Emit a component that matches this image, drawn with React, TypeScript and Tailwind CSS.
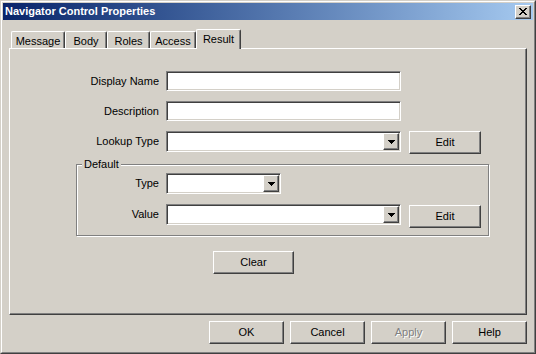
const sunken =
  'border border-t-[#808080] border-l-[#808080] border-b-white border-r-white shadow-[inset_1px_1px_0_#404040,inset_-1px_-1px_0_#d4d0c8] bg-white';
const raised =
  'border border-t-white border-l-white border-b-[#404040] border-r-[#404040] shadow-[inset_-1px_-1px_0_#808080] bg-[#d4d0c8]';

function Arrow() {
  return (
    <svg width="7" height="4" viewBox="0 0 7 4" shapeRendering="crispEdges">
      <polygon points="0,0 7,0 3.5,4" fill="#000" />
    </svg>
  );
}

function TextBox({ width }: { width: number }) {
  return <div className={`${sunken} h-[20px]`} style={{ width }} />;
}

function Combo({ width }: { width: number }) {
  return (
    <div className={`${sunken} h-[21px] flex justify-end p-px`} style={{ width }}>
      <div className={`${raised} w-[16px] h-full flex items-center justify-center`}>
        <Arrow />
      </div>
    </div>
  );
}

function Button({ label, w, disabled }: { label: string; w: string; disabled?: boolean }) {
  return (
    <div className={`${raised} ${w} h-[23px] flex items-center justify-center leading-none`}>
      <span className={disabled ? 'text-[#808080] [text-shadow:1px_1px_0_#fff]' : 'text-black'}>{label}</span>
    </div>
  );
}

function Tab({ label, w, active }: { label: string; w: string; active?: boolean }) {
  if (active) {
    return (
      <div
        className={`${w} h-[20px] relative z-10 bg-[#d4d0c8] border-t border-l border-r border-t-white border-l-white border-r-[#404040] shadow-[inset_-1px_0_0_#808080] rounded-t-[2px] flex items-center justify-center pb-px`}
      >
        {label}
      </div>
    );
  }
  return (
    <div
      className={`${w} h-[17px] mb-px bg-[#d4d0c8] border-t border-l border-r border-t-white border-l-white border-r-[#404040] shadow-[inset_-1px_0_0_#808080] rounded-t-[2px] flex items-center justify-center pt-[2px]`}
    >
      {label}
    </div>
  );
}

export default function App() {
  return (
    <div className="w-[536px] h-[354px] bg-[#d4d0c8] border border-t-[#d4d0c8] border-l-[#d4d0c8] border-b-[#404040] border-r-[#404040] font-['Liberation_Sans',Arial,sans-serif] text-[11px] text-black select-none">
      <div className="h-full border border-t-white border-l-white border-b-[#808080] border-r-[#808080] p-px flex flex-col">

        {/* ── Title bar ───────────────────────────── */}
        <div className="h-[17px] flex items-center justify-between bg-gradient-to-r from-[#0a246a] to-[#a6caf0] pl-[2px] pr-[2px]">
          <span className="text-white font-bold leading-none">Navigator Control Properties</span>
          <div className={`${raised} w-[16px] h-[14px] flex items-center justify-center`}>
            <svg width="8" height="7" viewBox="0 0 8 7" shapeRendering="crispEdges">
              <path d="M0 0h2v1h-2zM6 0h2v1h-2zM1 1h2v1h-2zM5 1h2v1h-2zM2 2h4v1h-4zM3 3h2v1h-2zM2 4h4v1h-4zM1 5h2v1h-2zM5 5h2v1h-2zM0 6h2v1h-2zM6 6h2v1h-2z" fill="#000" />
            </svg>
          </div>
        </div>

        {/* ── Tabs ────────────────────────────────── */}
        <div className="mt-[9px] ml-[8px] h-[20px] flex items-end">
          <Tab label="Message" w="w-[54px]" />
          <Tab label="Body" w="w-[42px]" />
          <Tab label="Roles" w="w-[43px]" />
          <Tab label="Access" w="w-[46px]" />
          <Tab label="Result" w="w-[45px]" active />
        </div>

        {/* ── Panel ───────────────────────────────── */}
        <div className={`-mt-px ml-[6px] w-[518px] h-[267px] ${raised} pt-[22px]`}>
          <div className="flex items-center">
            <div className="w-[156px] pr-[7px] text-right">Display Name</div>
            <TextBox width={235} />
          </div>
          <div className="flex items-center mt-[10px]">
            <div className="w-[156px] pr-[7px] text-right">Description</div>
            <TextBox width={235} />
          </div>
          <div className="flex items-start mt-[10px]">
            <div className="w-[156px] pr-[7px] text-right h-[21px] flex items-center justify-end">Lookup Type</div>
            <Combo width={235} />
            <div className="ml-[8px]">
              <Button label="Edit" w="w-[72px]" />
            </div>
          </div>

          {/* Default group */}
          <div className="relative mt-[10px] ml-[66px] w-[413px] h-[72px] border border-[#808080] shadow-[inset_1px_1px_0_#fff,1px_1px_0_#fff] pt-[8px]">
            <span className="absolute -top-[7px] left-[5px] px-[2px] bg-[#d4d0c8] leading-[13px]">Default</span>
            <div className="flex items-center">
              <div className="w-[89px] pr-[7px] text-right h-[21px] flex items-center justify-end">Type</div>
              <Combo width={115} />
            </div>
            <div className="flex items-start mt-[10px]">
              <div className="w-[89px] pr-[7px] text-right h-[21px] flex items-center justify-end">Value</div>
              <Combo width={235} />
              <div className="ml-[8px] mt-px">
                <Button label="Edit" w="w-[72px]" />
              </div>
            </div>
          </div>

          <div className="mt-[15px] ml-[203px]">
            <Button label="Clear" w="w-[81px]" />
          </div>
        </div>

        {/* ── Dialog buttons ──────────────────────── */}
        <div className="mt-[6px] mr-[6px] flex justify-end gap-[6px]">
          <Button label="OK" w="w-[75px]" />
          <Button label="Cancel" w="w-[75px]" />
          <Button label="Apply" w="w-[75px]" disabled />
          <Button label="Help" w="w-[75px]" />
        </div>
      </div>
    </div>
  );
}
